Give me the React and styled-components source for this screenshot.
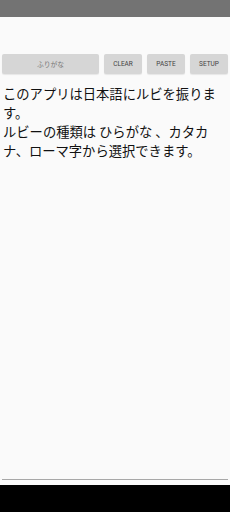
import React from 'react'
import styled, { createGlobalStyle } from 'styled-components'

const GlobalStyle = createGlobalStyle`
  html, body {
    margin: 0;
    padding: 0;
    background: #fafafa;
  }
`

const Screen = styled.div`
  width: 230px;
  height: 512px;
  display: flex;
  flex-direction: column;
  background: #fafafa;
  overflow: hidden;
`

const StatusBar = styled.div`
  height: 17px;
  background: #737373;
  flex-shrink: 0;
`

const Toolbar = styled.div`
  display: flex;
  gap: 5px;
  padding: 37px 2px 0;
`

const Button = styled.div`
  flex: ${p => (p.wide ? 1 : '0 0 38px')};
  height: 20px;
  display: flex;
  align-items: center;
  justify-content: center;
  background: #d6d6d6;
  border-radius: 2px;
  box-shadow: 0 1px 1px rgba(0, 0, 0, 0.08);
  color: ${p => (p.wide ? '#7a7a7a' : '#444')};
  font-family: Roboto, 'Noto Sans CJK JP', sans-serif;
  font-size: ${p => (p.wide ? '6.8px' : '6.5px')};
  font-weight: 400;
`

const Body = styled.div`
  flex: 1;
  padding: 10px 0 0 3px;
  width: 222px;
  font-family: 'Noto Sans CJK JP', sans-serif;
  font-size: 13.3px;
  line-height: 19px;
  color: #111;
`

const Divider = styled.div`
  height: 1px;
  margin: 0 2px 5px;
  background: #a8a8a8;
`

const NavBar = styled.div`
  height: 27px;
  background: #000;
  flex-shrink: 0;
`

export default function App() {
  return (
    <>
      <GlobalStyle />
      <Screen>
        <StatusBar />
        <Toolbar>
          <Button wide>ふりがな</Button>
          <Button>CLEAR</Button>
          <Button>PASTE</Button>
          <Button>SETUP</Button>
        </Toolbar>
        <Body>
          このアプリは日本語にルビを振ります。
          <br />
          ルビーの種類は ひらがな 、カタカナ、ローマ字から選択できます。
        </Body>
        <Divider />
        <NavBar />
      </Screen>
    </>
  )
}
